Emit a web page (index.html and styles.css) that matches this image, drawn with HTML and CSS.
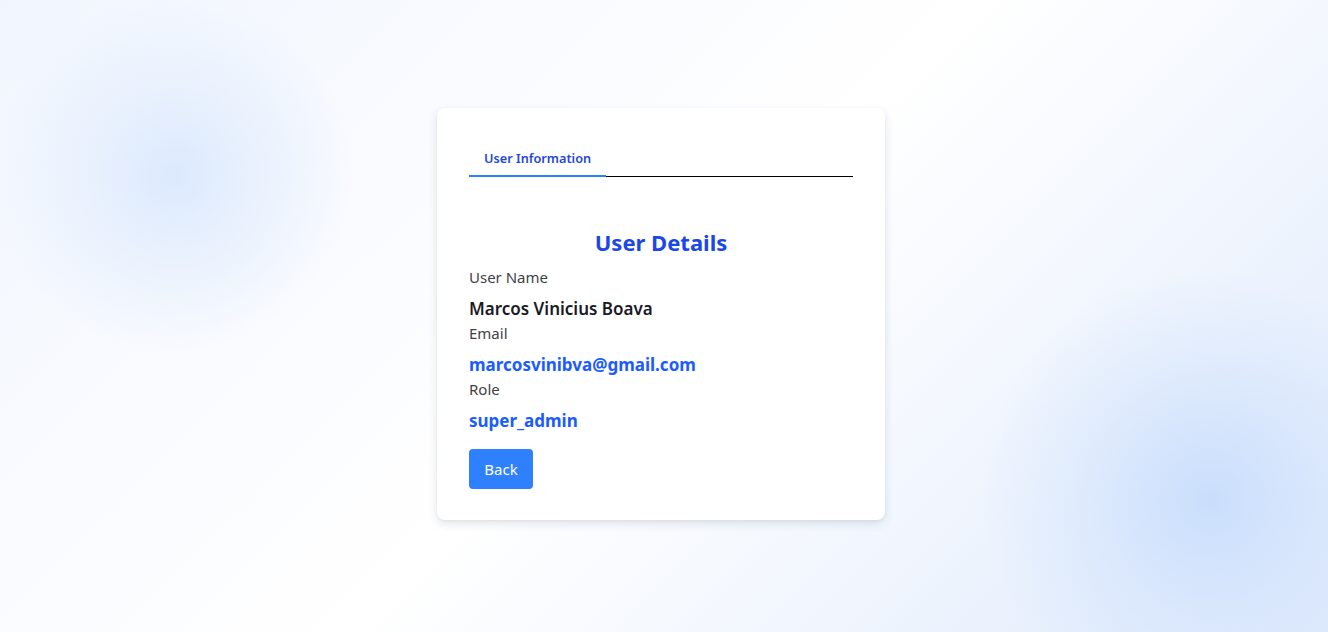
FILE: index.html
```html
<!DOCTYPE html>
<html lang="en">
<head>
<meta charset="utf-8">
<title>User Details</title>
<link rel="stylesheet" href="styles.css">
</head>
<body>
<main class="page">
  <section class="card">
    <nav class="tabs">
      <button class="tab active">User Information</button>
    </nav>
    <div class="details">
      <h1 class="title">User Details</h1>
      <div class="field">
        <div class="label">User Name</div>
        <div class="value name">Marcos Vinicius Boava</div>
      </div>
      <div class="field">
        <div class="label">Email</div>
        <div class="value link">marcosvinibva@gmail.com</div>
      </div>
      <div class="field">
        <div class="label">Role</div>
        <div class="value link">super_admin</div>
      </div>
      <button class="back">Back</button>
    </div>
  </section>
</main>
</body>
</html>
```
FILE: styles.css
```css
* { box-sizing: border-box; }
html, body { margin: 0; height: 100%; }
body {
  font-family: "Noto Sans", "Open Sans", sans-serif;
  background:
    radial-gradient(circle at 175px 175px, rgba(213, 229, 253, 0.8) 0, rgba(225, 236, 253, 0.5) 100px, rgba(240, 245, 254, 0) 180px),
    radial-gradient(circle at 1210px 500px, rgba(200, 221, 252, 0.95) 0, rgba(210, 227, 252, 0.6) 110px, rgba(225, 236, 253, 0) 230px),
    linear-gradient(135deg, #f1f6fe 0%, #fbfcff 35%, #ffffff 50%, #f3f7fe 70%, #dfeafc 100%);
}
.page {
  min-height: 632px;
  display: flex;
  justify-content: center;
  padding: 108px 6px 0 0;
}
.card {
  width: 448px;
  height: 412px;
  background: #fff;
  border-radius: 8px;
  box-shadow: 0 4px 10px rgba(30, 50, 90, 0.12), 0 1px 3px rgba(30, 50, 90, 0.05);
  padding: 32px;
}
.tabs {
  display: flex;
  border-bottom: 1px solid #000;
  height: 37px;
}
.tab {
  font-family: inherit;
  background: none;
  border: none;
  border-bottom: 2px solid #2f80ff;
  margin-bottom: -1px;
  padding: 0 15px;
  font-size: 12.7px;
  font-weight: 600;
  color: #2447d8;
  height: 37px;
  line-height: 30px;
  cursor: pointer;
}
.details {
  padding-top: 50px;
  display: flex;
  flex-direction: column;
  align-items: flex-start;
}
.title {
  align-self: stretch;
  text-align: center;
  margin: 0 0 8px;
  font-size: 22px;
  line-height: 30px;
  font-weight: 700;
  color: #1a47e8;
}
.field { display: flex; flex-direction: column; }
.label {
  font-size: 15px;
  line-height: 24px;
  color: #3f3f46;
}
.value {
  margin-top: 8px;
  font-size: 17px;
  line-height: 24px;
  font-weight: 600;
}
.name { color: #1a1a24; }
.link { color: #1a5cff; font-weight: 700; }
.back {
  margin-top: 16px;
  width: 64px;
  height: 40px;
  border: none;
  border-radius: 4px;
  background: #2f80ff;
  color: #fff;
  font-family: inherit;
  font-size: 15px;
  cursor: pointer;
}
```
